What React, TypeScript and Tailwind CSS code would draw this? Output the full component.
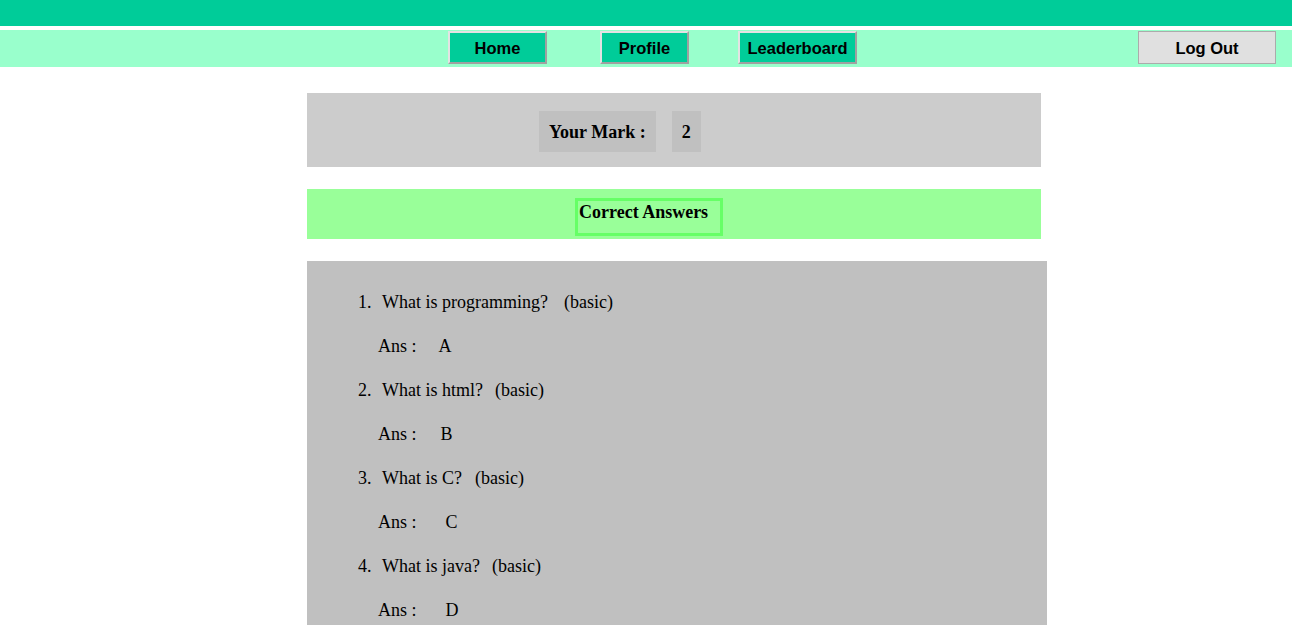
import React from 'react';

const QUESTIONS = [
  { q: 'What is programming?', gap: 'ml-[16px]', ans: 'A', ansGap: 'ml-[22px]' },
  { q: 'What is html?', gap: 'ml-[12px]', ans: 'B', ansGap: 'ml-[24px]' },
  { q: 'What is C?', gap: 'ml-[13px]', ans: 'C', ansGap: 'ml-[29px]' },
  { q: 'What is java?', gap: 'ml-[12px]', ans: 'D', ansGap: 'ml-[29px]' },
];

const navBtn =
  "h-[33px] pt-[2px] bg-[#00cc99] border-2 border-t-[#e3e3e3] border-l-[#e3e3e3] border-r-[#a0a0a0] border-b-[#a0a0a0] text-[16.5px] font-bold text-black font-['Liberation_Sans',Arial,sans-serif] flex items-center justify-center";

const App: React.FC = () => {
  return (
    <div className="min-h-screen bg-white font-['Liberation_Serif','Times_New_Roman',serif] text-black">
      <div className="h-[26px] bg-[#00cc99]" />
      <nav className="mt-[4px] h-[37px] bg-[#99ffcc] flex items-start pt-[1px]">
        <div className="flex ml-[448px]">
          <button className={`${navBtn} w-[99px]`}>Home</button>
          <button className={`${navBtn} w-[89px] ml-[53px]`}>Profile</button>
          <button className={`${navBtn} w-[119px] ml-[49px]`}>Leaderboard</button>
        </div>
        <button className="ml-auto mr-[16px] w-[138px] h-[33px] pt-[2px] bg-[#e0e0e0] border border-[#ababab] text-[16.5px] font-bold font-['Liberation_Sans',Arial,sans-serif] flex items-center justify-center">
          Log Out
        </button>
      </nav>

      <div className="ml-[307px] mt-[26px] w-[734px] h-[74px] bg-[#cccccc] flex items-start pt-[18px]">
        <div className="ml-[232px] h-[41px] px-[10px] pt-[2px] bg-[#c0c0c0] flex items-center text-[18px] font-bold">
          Your Mark :
        </div>
        <div className="ml-[16px] h-[41px] w-[29px] pt-[2px] bg-[#c0c0c0] flex items-center justify-center text-[18px] font-bold">
          2
        </div>
      </div>

      <div className="ml-[307px] mt-[22px] w-[734px] h-[50px] bg-[#99ff99] pt-[9px]">
        <div className="ml-[268px] w-[148px] h-[38px] border-[3px] border-[#66ff66] text-[18px] font-bold leading-[22px] pl-[1px]">
          Correct Answers
        </div>
      </div>

      <div className="ml-[307px] mt-[22px] w-[740px] bg-[#c0c0c0] pt-[19px] pb-[40px] text-[18px]">
        {QUESTIONS.map((item, i) => (
          <div key={i}>
            <div className="h-[44px] flex items-center">
              <span className="ml-[51px] w-[24px]">{i + 1}.</span>
              <span>{item.q}</span>
              <span className={item.gap}>(basic)</span>
            </div>
            <div className="h-[44px] flex items-center pt-[1px]">
              <span className="ml-[71px]">Ans :</span>
              <span className={item.ansGap}>{item.ans}</span>
            </div>
          </div>
        ))}
      </div>
    </div>
  );
};

export default App;
